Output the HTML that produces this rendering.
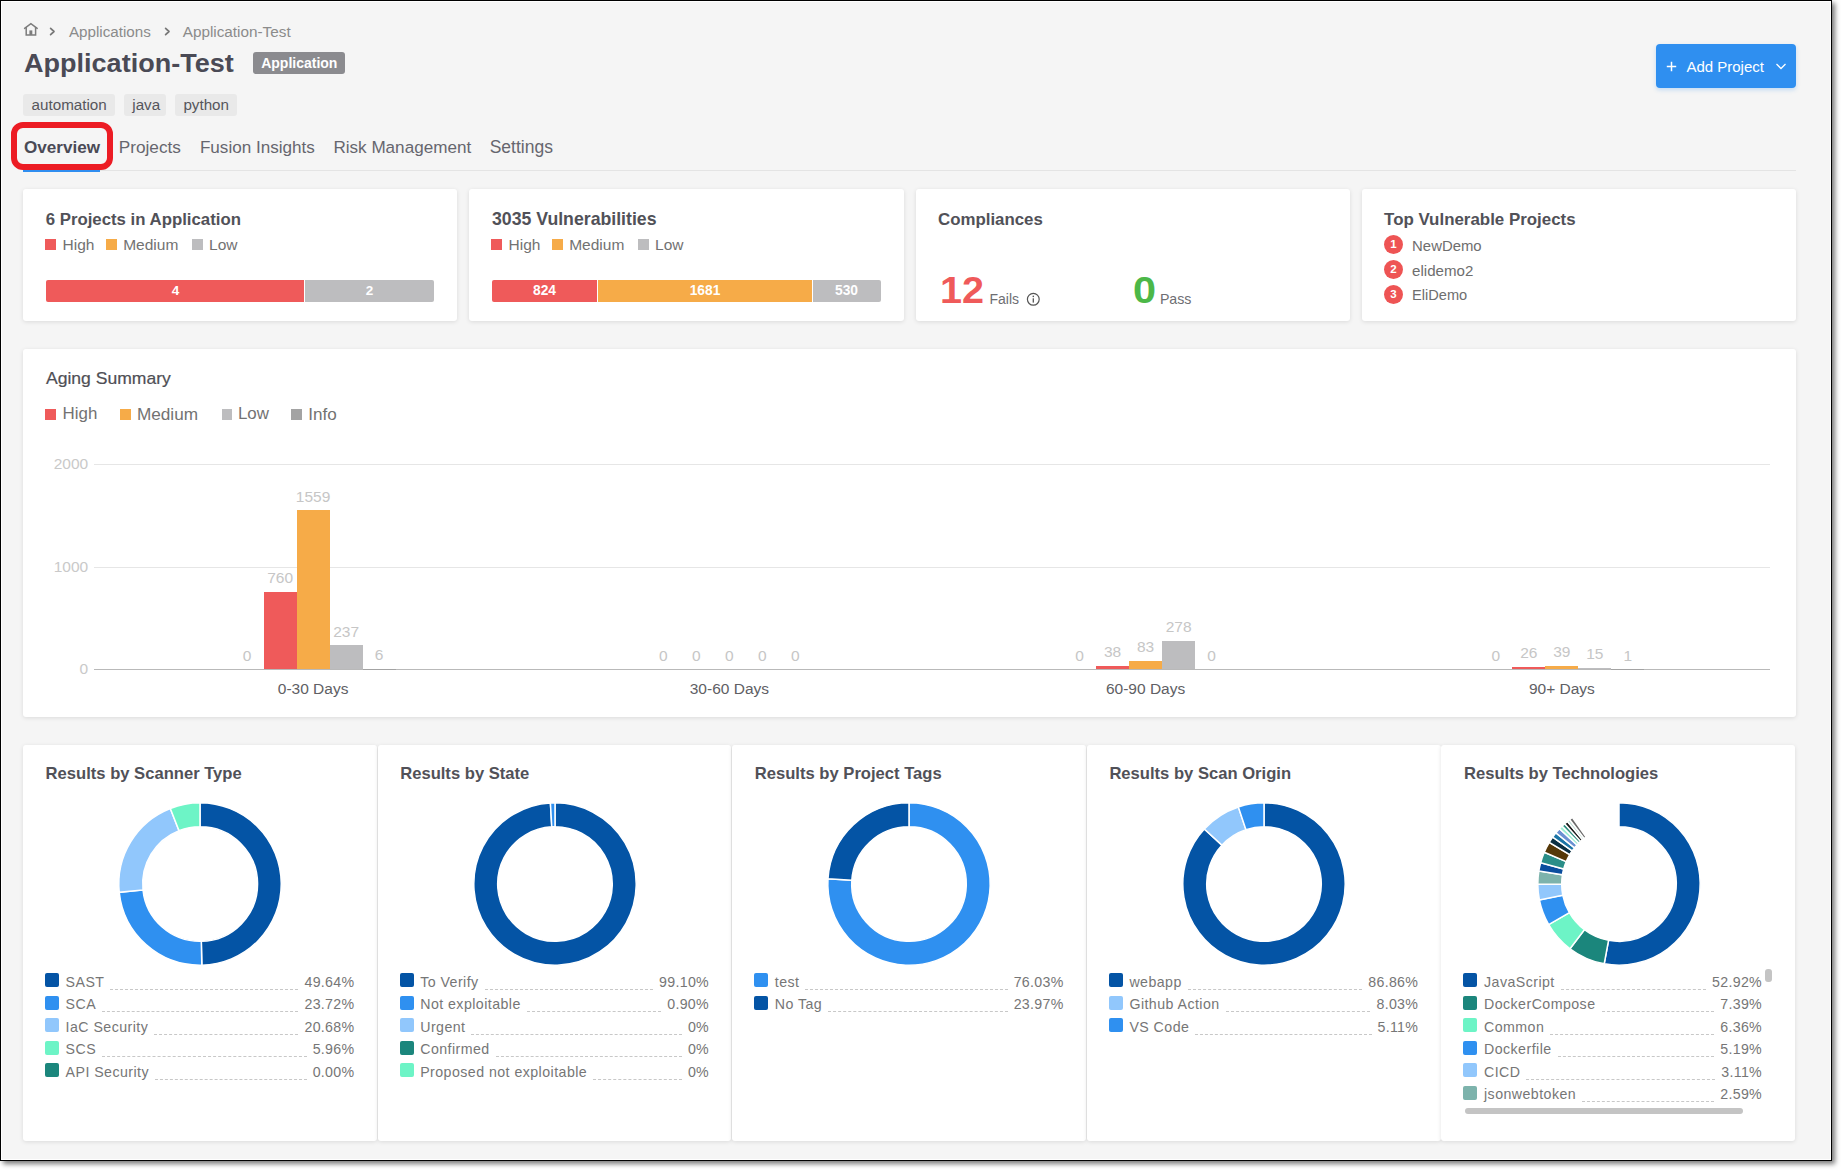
<!DOCTYPE html>
<html><head><meta charset="utf-8"><style>
html,body{margin:0;padding:0;background:#fff;}
body{width:1841px;height:1170px;position:relative;overflow:hidden;font-family:"Liberation Sans", sans-serif;}
#frame{position:absolute;left:0;top:0;width:1830px;height:1159px;border:1px solid #000;background:#f5f5f5;box-shadow:inset 0 0 0 1px #fff, 3px 3px 5px rgba(0,0,0,0.52);}
.t{position:absolute;white-space:nowrap;line-height:1;}
.r{position:absolute;}
.card{position:absolute;background:#fff;border-radius:3px;box-shadow:0 1px 4px rgba(0,0,0,0.11);}
.row{position:absolute;display:flex;align-items:baseline;font-size:14.2px;line-height:18px;color:#767676;white-space:nowrap;}
.row .lab{flex:none;letter-spacing:0.45px;}
.row .dots{flex:1;border-bottom:1px dashed #c8c8c8;margin:0 6px;height:0;align-self:flex-end;margin-bottom:1px;}
.row .pct{flex:none;letter-spacing:0.3px;}
</style></head><body>
<div id="frame"></div>
<svg class="r" style="left:22.5px;top:22px" width="16" height="15" viewBox="0 0 16 15"><path d="M1.6 6.4 L7.9 1.6 L14.2 6.4" fill="none" stroke="#7c7c7c" stroke-width="1.5" stroke-linejoin="miter" stroke-linecap="round"/><path d="M3.2 5.0 V12.9 H12.6 V5.0" fill="none" stroke="#7c7c7c" stroke-width="1.5" stroke-linejoin="miter"/><rect x="6.4" y="8.4" width="2.9" height="4.5" fill="#7c7c7c"/></svg>
<svg class="r" style="left:49.3px;top:26.8px" width="8" height="9" viewBox="0 0 8 9"><path d="M1.6 1.4 L5.0 4.5 L1.6 7.6" fill="none" stroke="#777" stroke-width="1.7" stroke-linecap="round" stroke-linejoin="round"/></svg>
<div class="t" style="left:68.90px;top:24.33px;font-size:15.2px;color:#8b8b8b;font-weight:normal;">Applications</div>
<svg class="r" style="left:163.8px;top:26.8px" width="8" height="9" viewBox="0 0 8 9"><path d="M1.6 1.4 L5.0 4.5 L1.6 7.6" fill="none" stroke="#777" stroke-width="1.7" stroke-linecap="round" stroke-linejoin="round"/></svg>
<div class="t" style="left:182.70px;top:24.25px;font-size:15.3px;color:#8b8b8b;font-weight:normal;">Application-Test</div>
<div class="t" style="left:24.40px;top:51.41px;font-size:25.5px;color:#4a4a55;font-weight:bold;transform:scaleX(1.06);transform-origin:left center;">Application-Test</div>
<div class="r" style="left:253.20px;top:51.90px;width:91.80px;height:22.20px;background:#8b8b8f;border-radius:3px"></div>
<div class="t" style="left:261.20px;top:56.45px;font-size:14px;color:#ffffff;font-weight:bold;">Application</div>
<div class="r" style="left:23.30px;top:94.00px;width:91.40px;height:22.20px;background:#e9e9e9;border-radius:3px"></div>
<div class="t" style="left:31.60px;top:97.23px;font-size:15.2px;color:#56565c;font-weight:normal;">automation</div>
<div class="r" style="left:124.00px;top:94.00px;width:42.10px;height:22.20px;background:#e9e9e9;border-radius:3px"></div>
<div class="t" style="left:132.30px;top:97.23px;font-size:15.2px;color:#56565c;font-weight:normal;">java</div>
<div class="r" style="left:175.30px;top:94.00px;width:62.20px;height:22.20px;background:#e9e9e9;border-radius:3px"></div>
<div class="t" style="left:183.40px;top:97.23px;font-size:15.2px;color:#56565c;font-weight:normal;">python</div>
<div class="t" style="left:24.00px;top:139.12px;font-size:17.1px;color:#4a4a55;font-weight:bold;">Overview</div>
<div class="t" style="left:118.80px;top:139.04px;font-size:17.2px;color:#66666e;font-weight:normal;">Projects</div>
<div class="t" style="left:199.90px;top:139.12px;font-size:17.1px;color:#66666e;font-weight:normal;">Fusion Insights</div>
<div class="t" style="left:333.40px;top:139.12px;font-size:17.1px;color:#66666e;font-weight:normal;">Risk Management</div>
<div class="t" style="left:489.70px;top:138.79px;font-size:17.5px;color:#66666e;font-weight:normal;">Settings</div>
<div class="r" style="left:23.00px;top:170.00px;width:1773.00px;height:1.00px;background:#e4e4e4;"></div>
<div class="r" style="left:23.30px;top:169.60px;width:76.70px;height:2.20px;background:#2f8ef0;"></div>
<div class="r" style="left:11.15px;top:121.9px;width:89.65px;height:35.7px;border:6px solid #ec1c24;border-radius:12px"></div>
<div class="r" style="left:1656px;top:44px;width:140px;height:44px;background:#2f8ff0;border-radius:4px;box-shadow:0 2px 4px rgba(47,143,240,0.25)"></div>
<svg class="r" style="left:1666px;top:61px" width="11" height="11" viewBox="0 0 11 11"><path d="M5.5 0.8 V10.2 M0.8 5.5 H10.2" stroke="#fff" stroke-width="1.5"/></svg>
<div class="t" style="left:1686.40px;top:59.30px;font-size:15px;color:#ffffff;font-weight:normal;">Add Project</div>
<svg class="r" style="left:1775px;top:62px" width="12" height="9" viewBox="0 0 12 9"><path d="M1.5 2 L6 6.5 L10.5 2" fill="none" stroke="#fff" stroke-width="1.3"/></svg>
<div class="card" style="left:23.00px;top:189.00px;width:434.25px;height:132.00px"></div>
<div class="card" style="left:469.25px;top:189.00px;width:434.25px;height:132.00px"></div>
<div class="card" style="left:915.50px;top:189.00px;width:434.25px;height:132.00px"></div>
<div class="card" style="left:1361.75px;top:189.00px;width:434.25px;height:132.00px"></div>
<div class="t" style="left:45.70px;top:212.08px;font-size:16.8px;color:#515158;font-weight:bold;">6 Projects in Application</div>
<div class="r" style="left:45.00px;top:239.00px;width:11.00px;height:11.00px;background:#ef5a5a;"></div>
<div class="t" style="left:62.50px;top:237.38px;font-size:15.5px;color:#727272;font-weight:normal;">High</div>
<div class="r" style="left:106.00px;top:239.00px;width:11.00px;height:11.00px;background:#f6ab48;"></div>
<div class="t" style="left:123.20px;top:237.38px;font-size:15.5px;color:#727272;font-weight:normal;">Medium</div>
<div class="r" style="left:192.00px;top:239.00px;width:11.00px;height:11.00px;background:#bdbdbf;"></div>
<div class="t" style="left:209.10px;top:237.38px;font-size:15.5px;color:#727272;font-weight:normal;">Low</div>
<div class="r" style="left:46.2px;top:280px;width:387.8px;height:22px;border-radius:2px;overflow:hidden"><div style="position:absolute;left:0;top:0;width:257.8px;height:22px;background:#ef5a5a"></div><div style="position:absolute;left:258.8px;top:0;width:129px;height:22px;background:#bdbdbf"></div></div>
<div class="t" style="left:-24.50px;width:400px;text-align:center;top:284.37px;font-size:13.5px;color:#fff;font-weight:bold;">4</div>
<div class="t" style="left:169.50px;width:400px;text-align:center;top:284.37px;font-size:13.5px;color:#fff;font-weight:bold;">2</div>
<div class="t" style="left:492.00px;top:211.32px;font-size:17.7px;color:#515158;font-weight:bold;">3035 Vulnerabilities</div>
<div class="r" style="left:491.00px;top:239.00px;width:11.00px;height:11.00px;background:#ef5a5a;"></div>
<div class="t" style="left:508.50px;top:237.38px;font-size:15.5px;color:#727272;font-weight:normal;">High</div>
<div class="r" style="left:552.00px;top:239.00px;width:11.00px;height:11.00px;background:#f6ab48;"></div>
<div class="t" style="left:569.20px;top:237.38px;font-size:15.5px;color:#727272;font-weight:normal;">Medium</div>
<div class="r" style="left:638.00px;top:239.00px;width:11.00px;height:11.00px;background:#bdbdbf;"></div>
<div class="t" style="left:655.10px;top:237.38px;font-size:15.5px;color:#727272;font-weight:normal;">Low</div>
<div class="r" style="left:492px;top:280px;width:389px;height:22px;border-radius:2px;overflow:hidden"><div style="position:absolute;left:0;top:0;width:105px;height:22px;background:#ef5a5a"></div><div style="position:absolute;left:106px;top:0;width:214px;height:22px;background:#f6ab48"></div><div style="position:absolute;left:321px;top:0;width:68px;height:22px;background:#bdbdbf"></div></div>
<div class="t" style="left:344.50px;width:400px;text-align:center;top:284.12px;font-size:13.8px;color:#fff;font-weight:bold;">824</div>
<div class="t" style="left:505.00px;width:400px;text-align:center;top:284.12px;font-size:13.8px;color:#fff;font-weight:bold;">1681</div>
<div class="t" style="left:646.50px;width:400px;text-align:center;top:284.12px;font-size:13.8px;color:#fff;font-weight:bold;">530</div>
<div class="t" style="left:938.00px;top:212.04px;font-size:16.85px;color:#515158;font-weight:bold;">Compliances</div>
<div class="t" style="left:939.70px;top:272.63px;font-size:36px;color:#ef5a5a;font-weight:bold;transform:scaleX(1.1);transform-origin:left center;">12</div>
<div class="t" style="left:989.50px;top:292.35px;font-size:14px;color:#6e6e73;font-weight:normal;">Fails</div>
<svg class="r" style="left:1026px;top:292px" width="14" height="14" viewBox="0 0 14 14"><circle cx="7.3" cy="7.3" r="5.9" fill="none" stroke="#555" stroke-width="1.2"/><rect x="6.65" y="6.3" width="1.3" height="4.3" fill="#555"/><circle cx="7.3" cy="4.4" r="0.8" fill="#555"/></svg>
<div class="t" style="left:1132.60px;top:272.63px;font-size:36px;color:#4cb848;font-weight:bold;transform:scaleX(1.15);transform-origin:left center;">0</div>
<div class="t" style="left:1159.90px;top:292.18px;font-size:14.2px;color:#6e6e73;font-weight:normal;">Pass</div>
<div class="t" style="left:1384.10px;top:211.89px;font-size:16.9px;color:#515158;font-weight:bold;">Top Vulnerable Projects</div>
<div class="r" style="left:1384px;top:235.30px;width:19px;height:19px;border-radius:50%;background:#ee5454;color:#fff;font-size:11.5px;font-weight:bold;line-height:19px;text-align:center;font-family:"Liberation Sans", sans-serif">1</div>
<div class="t" style="left:1412.10px;top:238.79px;font-size:14.9px;color:#6e6e6e;font-weight:normal;">NewDemo</div>
<div class="r" style="left:1384px;top:259.95px;width:19px;height:19px;border-radius:50%;background:#ee5454;color:#fff;font-size:11.5px;font-weight:bold;line-height:19px;text-align:center;font-family:"Liberation Sans", sans-serif">2</div>
<div class="t" style="left:1412.10px;top:263.27px;font-size:15.1px;color:#6e6e6e;font-weight:normal;">elidemo2</div>
<div class="r" style="left:1384px;top:284.60px;width:19px;height:19px;border-radius:50%;background:#ee5454;color:#fff;font-size:11.5px;font-weight:bold;line-height:19px;text-align:center;font-family:"Liberation Sans", sans-serif">3</div>
<div class="t" style="left:1412.10px;top:288.34px;font-size:14.6px;color:#6e6e6e;font-weight:normal;">EliDemo</div>
<div class="card" style="left:23.00px;top:349.30px;width:1773.00px;height:367.70px"></div>
<div class="t" style="left:46.20px;top:370.12px;font-size:16.4px;color:#4f4f55;font-weight:normal;-webkit-text-stroke:0.2px #4f4f55;transform:scaleX(1.07);transform-origin:left center;">Aging Summary</div>
<div class="r" style="left:45.40px;top:409.00px;width:10.50px;height:10.70px;background:#ef5a5a;"></div>
<div class="t" style="left:62.60px;top:405.89px;font-size:16.9px;color:#727272;font-weight:normal;">High</div>
<div class="r" style="left:120.00px;top:409.00px;width:10.50px;height:10.70px;background:#f6ab48;"></div>
<div class="t" style="left:136.90px;top:405.64px;font-size:17.2px;color:#727272;font-weight:normal;">Medium</div>
<div class="r" style="left:221.50px;top:409.00px;width:10.50px;height:10.70px;background:#bdbdbf;"></div>
<div class="t" style="left:237.90px;top:405.89px;font-size:16.9px;color:#727272;font-weight:normal;">Low</div>
<div class="r" style="left:291.20px;top:409.00px;width:10.50px;height:10.70px;background:#a3a3a3;"></div>
<div class="t" style="left:308.30px;top:405.72px;font-size:17.1px;color:#727272;font-weight:normal;">Info</div>
<div class="r" style="left:93.50px;top:464.00px;width:1676.50px;height:1.00px;background:#e6e6e6;"></div>
<div class="t" style="right:1752.80px;top:455.68px;font-size:15.5px;color:#c9c9c9;font-weight:normal;">2000</div>
<div class="r" style="left:93.50px;top:567.00px;width:1676.50px;height:1.00px;background:#e6e6e6;"></div>
<div class="t" style="right:1752.80px;top:558.68px;font-size:15.5px;color:#c9c9c9;font-weight:normal;">1000</div>
<div class="r" style="left:93.50px;top:669.00px;width:1676.50px;height:1.00px;background:#b9b9b9;"></div>
<div class="t" style="right:1752.80px;top:660.68px;font-size:15.5px;color:#c9c9c9;font-weight:normal;">0</div>
<div class="t" style="left:47.12px;width:400px;text-align:center;top:647.88px;font-size:15.5px;color:#c6c6c6;font-weight:normal;">0</div>
<div class="r" style="left:263.62px;top:591.83px;width:33.00px;height:77.67px;background:#ef5a5a;"></div>
<div class="t" style="left:80.12px;width:400px;text-align:center;top:570.21px;font-size:15.5px;color:#c6c6c6;font-weight:normal;">760</div>
<div class="r" style="left:296.62px;top:510.17px;width:33.00px;height:159.33px;background:#f6ab48;"></div>
<div class="t" style="left:113.12px;width:400px;text-align:center;top:488.55px;font-size:15.5px;color:#c6c6c6;font-weight:normal;">1559</div>
<div class="r" style="left:329.62px;top:645.28px;width:33.00px;height:24.22px;background:#bdbdbf;"></div>
<div class="t" style="left:146.12px;width:400px;text-align:center;top:623.66px;font-size:15.5px;color:#c6c6c6;font-weight:normal;">237</div>
<div class="r" style="left:362.62px;top:668.89px;width:33.00px;height:0.61px;background:#a3a3a3;"></div>
<div class="t" style="left:179.12px;width:400px;text-align:center;top:647.27px;font-size:15.5px;color:#c6c6c6;font-weight:normal;">6</div>
<div class="t" style="left:113.12px;width:400px;text-align:center;top:681.08px;font-size:15.5px;color:#606064;font-weight:normal;">0-30 Days</div>
<div class="t" style="left:463.38px;width:400px;text-align:center;top:647.88px;font-size:15.5px;color:#c6c6c6;font-weight:normal;">0</div>
<div class="t" style="left:496.38px;width:400px;text-align:center;top:647.88px;font-size:15.5px;color:#c6c6c6;font-weight:normal;">0</div>
<div class="t" style="left:529.38px;width:400px;text-align:center;top:647.88px;font-size:15.5px;color:#c6c6c6;font-weight:normal;">0</div>
<div class="t" style="left:562.38px;width:400px;text-align:center;top:647.88px;font-size:15.5px;color:#c6c6c6;font-weight:normal;">0</div>
<div class="t" style="left:595.38px;width:400px;text-align:center;top:647.88px;font-size:15.5px;color:#c6c6c6;font-weight:normal;">0</div>
<div class="t" style="left:529.38px;width:400px;text-align:center;top:681.08px;font-size:15.5px;color:#606064;font-weight:normal;">30-60 Days</div>
<div class="t" style="left:879.62px;width:400px;text-align:center;top:647.88px;font-size:15.5px;color:#c6c6c6;font-weight:normal;">0</div>
<div class="r" style="left:1096.12px;top:665.62px;width:33.00px;height:3.88px;background:#ef5a5a;"></div>
<div class="t" style="left:912.62px;width:400px;text-align:center;top:644.00px;font-size:15.5px;color:#c6c6c6;font-weight:normal;">38</div>
<div class="r" style="left:1129.12px;top:661.02px;width:33.00px;height:8.48px;background:#f6ab48;"></div>
<div class="t" style="left:945.62px;width:400px;text-align:center;top:639.40px;font-size:15.5px;color:#c6c6c6;font-weight:normal;">83</div>
<div class="r" style="left:1162.12px;top:641.09px;width:33.00px;height:28.41px;background:#bdbdbf;"></div>
<div class="t" style="left:978.62px;width:400px;text-align:center;top:619.47px;font-size:15.5px;color:#c6c6c6;font-weight:normal;">278</div>
<div class="t" style="left:1011.62px;width:400px;text-align:center;top:647.88px;font-size:15.5px;color:#c6c6c6;font-weight:normal;">0</div>
<div class="t" style="left:945.62px;width:400px;text-align:center;top:681.08px;font-size:15.5px;color:#606064;font-weight:normal;">60-90 Days</div>
<div class="t" style="left:1295.88px;width:400px;text-align:center;top:647.88px;font-size:15.5px;color:#c6c6c6;font-weight:normal;">0</div>
<div class="r" style="left:1512.38px;top:666.84px;width:33.00px;height:2.66px;background:#ef5a5a;"></div>
<div class="t" style="left:1328.88px;width:400px;text-align:center;top:645.22px;font-size:15.5px;color:#c6c6c6;font-weight:normal;">26</div>
<div class="r" style="left:1545.38px;top:665.51px;width:33.00px;height:3.99px;background:#f6ab48;"></div>
<div class="t" style="left:1361.88px;width:400px;text-align:center;top:643.89px;font-size:15.5px;color:#c6c6c6;font-weight:normal;">39</div>
<div class="r" style="left:1578.38px;top:667.97px;width:33.00px;height:1.53px;background:#bdbdbf;"></div>
<div class="t" style="left:1394.88px;width:400px;text-align:center;top:646.35px;font-size:15.5px;color:#c6c6c6;font-weight:normal;">15</div>
<div class="r" style="left:1611.38px;top:669.40px;width:33.00px;height:0.10px;background:#a3a3a3;"></div>
<div class="t" style="left:1427.88px;width:400px;text-align:center;top:647.78px;font-size:15.5px;color:#c6c6c6;font-weight:normal;">1</div>
<div class="t" style="left:1361.88px;width:400px;text-align:center;top:681.08px;font-size:15.5px;color:#606064;font-weight:normal;">90+ Days</div>
<div class="card" style="left:23.00px;top:745.40px;width:353.80px;height:395.20px"></div>
<div class="card" style="left:377.60px;top:745.40px;width:353.80px;height:395.20px"></div>
<div class="card" style="left:732.20px;top:745.40px;width:353.80px;height:395.20px"></div>
<div class="card" style="left:1086.80px;top:745.40px;width:353.80px;height:395.20px"></div>
<div class="card" style="left:1441.40px;top:745.40px;width:353.80px;height:395.20px"></div>
<div class="t" style="left:45.60px;top:765.55px;font-size:16.6px;color:#515158;font-weight:bold;">Results by Scanner Type</div>
<div class="t" style="left:400.20px;top:765.55px;font-size:16.6px;color:#515158;font-weight:bold;">Results by State</div>
<div class="t" style="left:754.80px;top:765.55px;font-size:16.6px;color:#515158;font-weight:bold;">Results by Project Tags</div>
<div class="t" style="left:1109.40px;top:765.55px;font-size:16.6px;color:#515158;font-weight:bold;">Results by Scan Origin</div>
<div class="t" style="left:1464.00px;top:765.55px;font-size:16.6px;color:#515158;font-weight:bold;">Results by Technologies</div>
<svg class="r" style="left:110.20px;top:794.30px" width="180" height="180" viewBox="110.20 794.30 180 180"><path d="M200.20 803.10 A81.2 81.2 0 0 1 202.04 965.48 L201.50 941.59 A57.3 57.3 0 0 0 200.20 827.00 Z" fill="#0454a5" stroke="#fff" stroke-width="1.5" stroke-linejoin="miter"/><path d="M202.04 965.48 A81.2 81.2 0 0 1 119.43 892.65 L143.20 890.19 A57.3 57.3 0 0 0 201.50 941.59 Z" fill="#2f90f0" stroke="#fff" stroke-width="1.5" stroke-linejoin="miter"/><path d="M119.43 892.65 A81.2 81.2 0 0 1 170.50 808.73 L179.24 830.97 A57.3 57.3 0 0 0 143.20 890.19 Z" fill="#91c7fc" stroke="#fff" stroke-width="1.5" stroke-linejoin="miter"/><path d="M170.50 808.73 A81.2 81.2 0 0 1 200.20 803.10 L200.20 827.00 A57.3 57.3 0 0 0 179.24 830.97 Z" fill="#6df4c6" stroke="#fff" stroke-width="1.5" stroke-linejoin="miter"/></svg>
<div class="r" style="left:45.00px;top:973.00px;width:14.00px;height:14.00px;background:#0454a5;border-radius:2px"></div>
<div class="row" style="left:65.60px;top:972.78px;width:288.80px"><span class="lab">SAST</span><span class="dots"></span><span class="pct">49.64%</span></div>
<div class="r" style="left:45.00px;top:995.50px;width:14.00px;height:14.00px;background:#2f90f0;border-radius:2px"></div>
<div class="row" style="left:65.60px;top:995.28px;width:288.80px"><span class="lab">SCA</span><span class="dots"></span><span class="pct">23.72%</span></div>
<div class="r" style="left:45.00px;top:1018.00px;width:14.00px;height:14.00px;background:#91c7fc;border-radius:2px"></div>
<div class="row" style="left:65.60px;top:1017.78px;width:288.80px"><span class="lab">IaC Security</span><span class="dots"></span><span class="pct">20.68%</span></div>
<div class="r" style="left:45.00px;top:1040.50px;width:14.00px;height:14.00px;background:#6df4c6;border-radius:2px"></div>
<div class="row" style="left:65.60px;top:1040.28px;width:288.80px"><span class="lab">SCS</span><span class="dots"></span><span class="pct">5.96%</span></div>
<div class="r" style="left:45.00px;top:1063.00px;width:14.00px;height:14.00px;background:#1b867c;border-radius:2px"></div>
<div class="row" style="left:65.60px;top:1062.78px;width:288.80px"><span class="lab">API Security</span><span class="dots"></span><span class="pct">0.00%</span></div>
<svg class="r" style="left:464.80px;top:794.30px" width="180" height="180" viewBox="464.80 794.30 180 180"><path d="M554.80 803.10 A81.2 81.2 0 1 1 550.21 803.23 L551.56 827.09 A57.3 57.3 0 1 0 554.80 827.00 Z" fill="#0454a5" stroke="#fff" stroke-width="1.5" stroke-linejoin="miter"/><path d="M550.21 803.23 A81.2 81.2 0 0 1 554.80 803.10 L554.80 827.00 A57.3 57.3 0 0 0 551.56 827.09 Z" fill="#2f90f0" stroke="#fff" stroke-width="1.5" stroke-linejoin="miter"/></svg>
<div class="r" style="left:399.60px;top:973.00px;width:14.00px;height:14.00px;background:#0454a5;border-radius:2px"></div>
<div class="row" style="left:420.20px;top:972.78px;width:288.80px"><span class="lab">To Verify</span><span class="dots"></span><span class="pct">99.10%</span></div>
<div class="r" style="left:399.60px;top:995.50px;width:14.00px;height:14.00px;background:#2f90f0;border-radius:2px"></div>
<div class="row" style="left:420.20px;top:995.28px;width:288.80px"><span class="lab">Not exploitable</span><span class="dots"></span><span class="pct">0.90%</span></div>
<div class="r" style="left:399.60px;top:1018.00px;width:14.00px;height:14.00px;background:#91c7fc;border-radius:2px"></div>
<div class="row" style="left:420.20px;top:1017.78px;width:288.80px"><span class="lab">Urgent</span><span class="dots"></span><span class="pct">0%</span></div>
<div class="r" style="left:399.60px;top:1040.50px;width:14.00px;height:14.00px;background:#1b867c;border-radius:2px"></div>
<div class="row" style="left:420.20px;top:1040.28px;width:288.80px"><span class="lab">Confirmed</span><span class="dots"></span><span class="pct">0%</span></div>
<div class="r" style="left:399.60px;top:1063.00px;width:14.00px;height:14.00px;background:#6df4c6;border-radius:2px"></div>
<div class="row" style="left:420.20px;top:1062.78px;width:288.80px"><span class="lab">Proposed not exploitable</span><span class="dots"></span><span class="pct">0%</span></div>
<svg class="r" style="left:819.40px;top:794.30px" width="180" height="180" viewBox="819.40 794.30 180 180"><path d="M909.40 803.10 A81.2 81.2 0 1 1 828.37 879.05 L852.22 880.59 A57.3 57.3 0 1 0 909.40 827.00 Z" fill="#2f90f0" stroke="#fff" stroke-width="1.5" stroke-linejoin="miter"/><path d="M828.37 879.05 A81.2 81.2 0 0 1 909.40 803.10 L909.40 827.00 A57.3 57.3 0 0 0 852.22 880.59 Z" fill="#0454a5" stroke="#fff" stroke-width="1.5" stroke-linejoin="miter"/></svg>
<div class="r" style="left:754.20px;top:973.00px;width:14.00px;height:14.00px;background:#2f90f0;border-radius:2px"></div>
<div class="row" style="left:774.80px;top:972.78px;width:288.80px"><span class="lab">test</span><span class="dots"></span><span class="pct">76.03%</span></div>
<div class="r" style="left:754.20px;top:995.50px;width:14.00px;height:14.00px;background:#0454a5;border-radius:2px"></div>
<div class="row" style="left:774.80px;top:995.28px;width:288.80px"><span class="lab">No Tag</span><span class="dots"></span><span class="pct">23.97%</span></div>
<svg class="r" style="left:1174.00px;top:794.30px" width="180" height="180" viewBox="1174.00 794.30 180 180"><path d="M1264.00 803.10 A81.2 81.2 0 1 1 1204.32 829.24 L1221.89 845.44 A57.3 57.3 0 1 0 1264.00 827.00 Z" fill="#0454a5" stroke="#fff" stroke-width="1.5" stroke-linejoin="miter"/><path d="M1204.32 829.24 A81.2 81.2 0 0 1 1238.37 807.25 L1245.92 829.93 A57.3 57.3 0 0 0 1221.89 845.44 Z" fill="#91c7fc" stroke="#fff" stroke-width="1.5" stroke-linejoin="miter"/><path d="M1238.37 807.25 A81.2 81.2 0 0 1 1264.00 803.10 L1264.00 827.00 A57.3 57.3 0 0 0 1245.92 829.93 Z" fill="#2f90f0" stroke="#fff" stroke-width="1.5" stroke-linejoin="miter"/></svg>
<div class="r" style="left:1108.80px;top:973.00px;width:14.00px;height:14.00px;background:#0454a5;border-radius:2px"></div>
<div class="row" style="left:1129.40px;top:972.78px;width:288.80px"><span class="lab">webapp</span><span class="dots"></span><span class="pct">86.86%</span></div>
<div class="r" style="left:1108.80px;top:995.50px;width:14.00px;height:14.00px;background:#91c7fc;border-radius:2px"></div>
<div class="row" style="left:1129.40px;top:995.28px;width:288.80px"><span class="lab">Github Action</span><span class="dots"></span><span class="pct">8.03%</span></div>
<div class="r" style="left:1108.80px;top:1018.00px;width:14.00px;height:14.00px;background:#2f90f0;border-radius:2px"></div>
<div class="row" style="left:1129.40px;top:1017.78px;width:288.80px"><span class="lab">VS Code</span><span class="dots"></span><span class="pct">5.11%</span></div>
<svg class="r" style="left:1528.60px;top:794.30px" width="180" height="180" viewBox="1528.60 794.30 180 180"><path d="M1618.60 803.10 A81.2 81.2 0 1 1 1603.79 964.14 L1608.15 940.64 A57.3 57.3 0 1 0 1618.60 827.00 Z" fill="#0454a5" stroke="#fff" stroke-width="1.5" stroke-linejoin="miter"/><path d="M1603.79 964.14 A81.2 81.2 0 0 1 1569.60 949.05 L1584.02 929.99 A57.3 57.3 0 0 0 1608.15 940.64 Z" fill="#1b867c" stroke="#fff" stroke-width="1.5" stroke-linejoin="miter"/><path d="M1569.60 949.05 A81.2 81.2 0 0 1 1548.27 924.89 L1568.97 912.94 A57.3 57.3 0 0 0 1584.02 929.99 Z" fill="#6df4c6" stroke="#fff" stroke-width="1.5" stroke-linejoin="miter"/><path d="M1548.27 924.89 A81.2 81.2 0 0 1 1538.98 900.22 L1562.41 895.53 A57.3 57.3 0 0 0 1568.97 912.94 Z" fill="#2f90f0" stroke="#fff" stroke-width="1.5" stroke-linejoin="miter"/><path d="M1538.98 900.22 A81.2 81.2 0 0 1 1537.40 884.45 L1561.30 884.41 A57.3 57.3 0 0 0 1562.41 895.53 Z" fill="#91c7fc" stroke="#fff" stroke-width="1.5" stroke-linejoin="miter"/><path d="M1537.40 884.45 A81.2 81.2 0 0 1 1538.45 871.30 L1562.04 875.12 A57.3 57.3 0 0 0 1561.30 884.41 Z" fill="#7db3ac" stroke="#fff" stroke-width="1.5" stroke-linejoin="miter"/><path d="M1538.45 871.30 A81.2 81.2 0 0 1 1540.25 862.99 L1563.31 869.26 A57.3 57.3 0 0 0 1562.04 875.12 Z" fill="#0b4e9e" stroke="#fff" stroke-width="1.5" stroke-linejoin="miter"/><path d="M1540.25 862.99 A81.2 81.2 0 0 1 1543.87 852.55 L1565.86 861.89 A57.3 57.3 0 0 0 1563.31 869.26 Z" fill="#2a8e88" stroke="#fff" stroke-width="1.5" stroke-linejoin="miter"/><path d="M1543.87 852.55 A81.2 81.2 0 0 1 1548.87 842.70 L1569.39 854.94 A57.3 57.3 0 0 0 1565.86 861.89 Z" fill="#553808" stroke="#fff" stroke-width="1.5" stroke-linejoin="miter"/><path d="M1548.87 842.70 A81.2 81.2 0 0 1 1552.26 837.47 L1571.79 851.26 A57.3 57.3 0 0 0 1569.39 854.94 Z" fill="#0b2f42" stroke="#fff" stroke-width="1.5" stroke-linejoin="miter"/><path d="M1552.26 837.47 A81.2 81.2 0 0 1 1555.51 833.18 L1574.08 848.22 A57.3 57.3 0 0 0 1571.79 851.26 Z" fill="#1a74a6" stroke="#fff" stroke-width="1.5" stroke-linejoin="miter"/><path d="M1555.51 833.18 A81.2 81.2 0 0 1 1559.04 829.11 L1576.57 845.35 A57.3 57.3 0 0 0 1574.08 848.22 Z" fill="#6b91d2" stroke="#fff" stroke-width="1.5" stroke-linejoin="miter"/><path d="M1559.04 829.11 A81.2 81.2 0 0 1 1561.71 826.36 L1578.45 843.42 A57.3 57.3 0 0 0 1576.57 845.35 Z" fill="#a0f0d4" stroke="#fff" stroke-width="1.5" stroke-linejoin="miter"/><path d="M1561.71 826.36 A81.2 81.2 0 0 1 1564.29 823.94 L1580.27 841.70 A57.3 57.3 0 0 0 1578.45 843.42 Z" fill="#2f8f80" stroke="#fff" stroke-width="1.5" stroke-linejoin="miter"/><path d="M1564.29 823.94 A81.2 81.2 0 0 1 1566.97 821.63 L1582.17 840.07 A57.3 57.3 0 0 0 1580.27 841.70 Z" fill="#1a1a1a" stroke="#fff" stroke-width="1.5" stroke-linejoin="miter"/><path d="M1566.97 821.63 A81.2 81.2 0 0 1 1569.19 819.86 L1583.73 838.83 A57.3 57.3 0 0 0 1582.17 840.07 Z" fill="#b8d8d0" stroke="#fff" stroke-width="1.5" stroke-linejoin="miter"/><path d="M1569.19 819.86 A81.2 81.2 0 0 1 1572.05 817.77 L1585.75 837.35 A57.3 57.3 0 0 0 1583.73 838.83 Z" fill="#6a6a6a" stroke="#fff" stroke-width="1.5" stroke-linejoin="miter"/></svg>
<div class="r" style="left:1463.40px;top:973.00px;width:14.00px;height:14.00px;background:#0454a5;border-radius:2px"></div>
<div class="row" style="left:1484.00px;top:972.78px;width:278.00px"><span class="lab">JavaScript</span><span class="dots"></span><span class="pct">52.92%</span></div>
<div class="r" style="left:1463.40px;top:995.50px;width:14.00px;height:14.00px;background:#1b867c;border-radius:2px"></div>
<div class="row" style="left:1484.00px;top:995.28px;width:278.00px"><span class="lab">DockerCompose</span><span class="dots"></span><span class="pct">7.39%</span></div>
<div class="r" style="left:1463.40px;top:1018.00px;width:14.00px;height:14.00px;background:#6df4c6;border-radius:2px"></div>
<div class="row" style="left:1484.00px;top:1017.78px;width:278.00px"><span class="lab">Common</span><span class="dots"></span><span class="pct">6.36%</span></div>
<div class="r" style="left:1463.40px;top:1040.50px;width:14.00px;height:14.00px;background:#2f90f0;border-radius:2px"></div>
<div class="row" style="left:1484.00px;top:1040.28px;width:278.00px"><span class="lab">Dockerfile</span><span class="dots"></span><span class="pct">5.19%</span></div>
<div class="r" style="left:1463.40px;top:1063.00px;width:14.00px;height:14.00px;background:#91c7fc;border-radius:2px"></div>
<div class="row" style="left:1484.00px;top:1062.78px;width:278.00px"><span class="lab">CICD</span><span class="dots"></span><span class="pct">3.11%</span></div>
<div class="r" style="left:1463.40px;top:1085.50px;width:14.00px;height:14.00px;background:#7db3ac;border-radius:2px"></div>
<div class="row" style="left:1484.00px;top:1085.28px;width:278.00px"><span class="lab">jsonwebtoken</span><span class="dots"></span><span class="pct">2.59%</span></div>
<div class="r" style="left:1765.00px;top:969.00px;width:6.50px;height:12.50px;background:#c4c4c4;border-radius:3px"></div>
<div class="r" style="left:1465.00px;top:1107.80px;width:278.00px;height:5.80px;background:#c4c4c4;border-radius:3px"></div>
</body></html>
